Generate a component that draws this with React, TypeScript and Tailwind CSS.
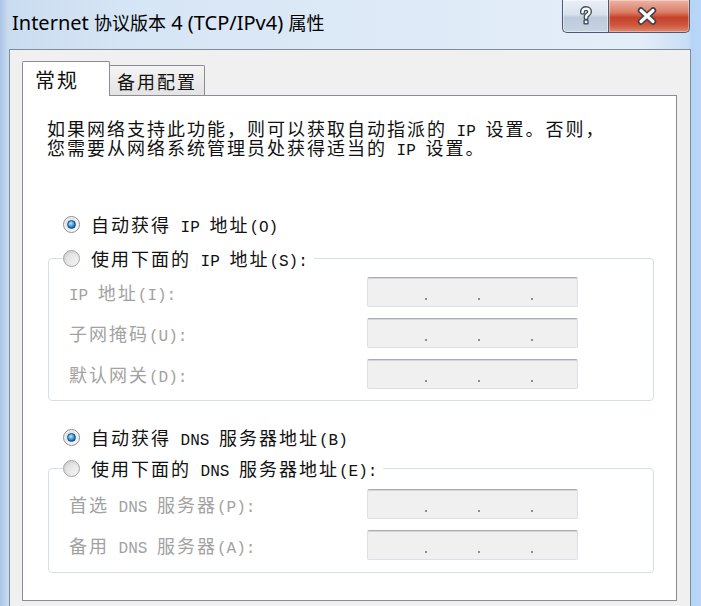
import React from "react";

const LAT = "[font-family:'Liberation_Mono',monospace] text-[16px] tracking-normal leading-[0px]";

function M({ s }: { s: string }) {
  const parts = s.split(/([\x00-\xff]+)/).filter((p) => p.length > 0);
  return (
    <>
      {parts.map((p, i) =>
        /^[\x00-\xff]+$/.test(p) ? (
          <span key={i} className={LAT}>
            {p}
          </span>
        ) : (
          <React.Fragment key={i}>{p}</React.Fragment>
        )
      )}
    </>
  );
}

function Radio({ on }: { on?: boolean }) {
  if (on) {
    return (
      <span className="w-[17px] h-[17px] shrink-0 rounded-full border border-[#8c8e90] bg-[linear-gradient(135deg,#d9dadb,#fbfbfb)] flex items-center justify-center shadow-[inset_0_0_0_1px_#f6f6f6]">
        <span className="w-[9px] h-[9px] rounded-full border border-[#1b4d7e] bg-[radial-gradient(circle_at_40%_35%,#bfe8ff_0%,#4aa6e6_40%,#135ea5_75%,#0c3f73_100%)]" />
      </span>
    );
  }
  return (
    <span className="w-[17px] h-[17px] shrink-0 rounded-full border border-[#a3a5a8] bg-[linear-gradient(135deg,#c9cacc,#f7f7f7)] flex items-center justify-center">
      <span className="w-[11px] h-[11px] rounded-full bg-[linear-gradient(135deg,#dcdcdc,#f4f4f4)]" />
    </span>
  );
}

function IpBox() {
  return (
    <div className="w-[211px] h-[30px] shrink-0 rounded-[2px] border border-[#dbe0e6] border-t-[#a9adb4] bg-[#f0f0f0] shadow-[inset_0_1px_0_#d3d5d9] flex items-start pt-[20px] pl-[57px] gap-[51px]">
      <span className="w-[2px] h-[2px] bg-[#8d8d8d]" />
      <span className="w-[2px] h-[2px] bg-[#8d8d8d]" />
      <span className="w-[2px] h-[2px] bg-[#8d8d8d]" />
    </div>
  );
}

function Row({ label }: { label: string }) {
  return (
    <div className="flex items-center h-[30px]">
      <div className="w-[298px] text-[18px] tracking-[2px] leading-[20px] text-[#a2a2a2] whitespace-pre">
        <M s={label} />
      </div>
      <IpBox />
    </div>
  );
}

function Group({
  legend,
  rows,
  pb,
}: {
  legend: string;
  rows: string[];
  pb: string;
}) {
  return (
    <fieldset className="ml-[1px] w-[606px] border border-[#d5dfe5] rounded-[4px] p-0 m-0">
      <legend className="ml-[14px] pr-[6px] p-0">
        <div className="flex items-center gap-[11px] h-[20px] text-[18px] tracking-[2px] leading-[20px] text-[#111] whitespace-pre">
          <Radio />
          <span>
            <M s={legend} />
          </span>
        </div>
      </legend>
      <div className={"pl-[20px] flex flex-col gap-[11px] " + pb}>
        {rows.map((r) => (
          <Row key={r} label={r} />
        ))}
      </div>
    </fieldset>
  );
}

export default function App() {
  return (
    <div className="w-[701px] h-[606px] overflow-hidden flex flex-col bg-[linear-gradient(90deg,#a8c4e5_0px,#cadcf0_8px,#d6e5f5_120px,#e1ecf8_520px,#e4eef9_640px,#c8ddf4_688px,#b5d4f7_692px,#bcd8f8_701px)] [font-family:'Noto_Sans_CJK_SC',sans-serif]">
      {/* title bar */}
      <div className="h-[49px] shrink-0 flex items-start">
        <div className="pl-[12px] pt-[10px] leading-[26px] text-[20px] text-black whitespace-pre [font-family:'Noto_Sans','Noto_Sans_CJK_SC',sans-serif]">
          Internet <span className="text-[18px]">协议版本</span> 4 (TCP/IPv4){" "}
          <span className="text-[18px]">属性</span>
        </div>
        <div className="ml-auto mr-[11px] flex">
          <div className="w-[46px] h-[33px] border border-t-0 border-r-0 border-[#4b5a6e] rounded-bl-[5px] bg-[linear-gradient(180deg,#e9eff6_0%,#d8e2ed_45%,#bccbdc_55%,#c6d3e2_100%)] shadow-[inset_0_0_0_1px_rgba(255,255,255,0.45)] flex items-center justify-center">
            <svg width="14" height="20" viewBox="0 0 14 20">
              <path
                d="M3.5 6.2 C3.5 3.6 5.2 2.6 7 2.6 C9.1 2.6 10.5 3.9 10.5 5.7 C10.5 8 8.3 8.6 7.3 10 L7.1 11.6"
                fill="none"
                stroke="#3f4b5b"
                strokeWidth="5"
                strokeLinecap="round"
              />
              <rect x="4.4" y="13.4" width="5.2" height="5" rx="1" fill="#3f4b5b" />
              <path
                d="M3.5 6.2 C3.5 3.6 5.2 2.6 7 2.6 C9.1 2.6 10.5 3.9 10.5 5.7 C10.5 8 8.3 8.6 7.3 10 L7.1 11.6"
                fill="none"
                stroke="#ffffff"
                strokeWidth="2.4"
                strokeLinecap="round"
              />
              <rect x="5.8" y="14.7" width="2.5" height="2.4" fill="#ffffff" />
            </svg>
          </div>
          <div className="w-[82px] h-[33px] border border-t-0 border-[#4b5a6e] rounded-br-[5px] bg-[linear-gradient(180deg,#ebb4a6_0%,#dc7e67_38%,#c5412a_55%,#cd563c_78%,#dd8a72_100%)] shadow-[inset_0_0_0_1px_rgba(255,255,255,0.35)] flex items-center justify-center">
            <svg width="20" height="18" viewBox="0 0 20 18" className="-ml-[4px]">
              <path d="M4 3.5 L16 14.5 M16 3.5 L4 14.5" stroke="#3f3f46" strokeWidth="6.4" strokeLinecap="round" />
              <path d="M4 3.5 L16 14.5 M16 3.5 L4 14.5" stroke="#ffffff" strokeWidth="3.2" strokeLinecap="round" />
            </svg>
          </div>
        </div>
      </div>

      {/* dialog body */}
      <div className="flex-1 ml-[9px] w-[682px] border-l border-t border-r border-[#7f8c9b] bg-[#f0f0f0] pl-[12px] pr-[13px] pt-[11px] pb-[5px] flex flex-col">
        <div className="flex items-end h-[35px] -mb-[1px] relative z-10 shrink-0">
          <div className="w-[88px] h-[35px] bg-white border border-b-0 border-[#898c95] rounded-t-[2px] pl-[12px] pt-[6px] text-[20px] tracking-[2px] leading-[24px] text-[#111]">
            常规
          </div>
          <div className="w-[95px] h-[30px] mb-[1px] border border-b-0 border-l-0 border-[#898c95] rounded-tr-[2px] bg-[linear-gradient(180deg,#f4f4f4,#e3e3e3)] pl-[7px] pt-[3px] text-[18px] tracking-[2px] leading-[24px] text-[#111]">
            备用配置
          </div>
        </div>
        <div className="flex-1 bg-white border border-[#898c95] pl-[24px] pt-[23px] flex flex-col">
          <p className="whitespace-pre text-[18px] tracking-[2px] leading-[19px] text-[#111]">
            <M s="如果网络支持此功能，则可以获取自动指派的 IP 设置。否则，" />
            <br />
            <M s="您需要从网络系统管理员处获得适当的 IP 设置。" />
          </p>

          <div className="mt-[57px] ml-[16px] flex items-center gap-[11px] h-[20px] text-[18px] tracking-[2px] leading-[20px] text-[#111] whitespace-pre">
            <Radio on />
            <span>
              <M s="自动获得 IP 地址(O)" />
            </span>
          </div>

          <div className="mt-[14px]">
            <Group
              legend="使用下面的 IP 地址(S):"
              rows={["IP 地址(I):", "子网掩码(U):", "默认网关(D):"]}
              pb="pt-[9px] pb-[11px]"
            />
          </div>

          <div className="mt-[26px] ml-[16px] flex items-center gap-[11px] h-[20px] text-[18px] tracking-[2px] leading-[20px] text-[#111] whitespace-pre">
            <Radio on />
            <span>
              <M s="自动获得 DNS 服务器地址(B)" />
            </span>
          </div>

          <div className="mt-[11px]">
            <Group
              legend="使用下面的 DNS 服务器地址(E):"
              rows={["首选 DNS 服务器(P):", "备用 DNS 服务器(A):"]}
              pb="pt-[11px] pb-[12px]"
            />
          </div>
        </div>
      </div>
    </div>
  );
}
